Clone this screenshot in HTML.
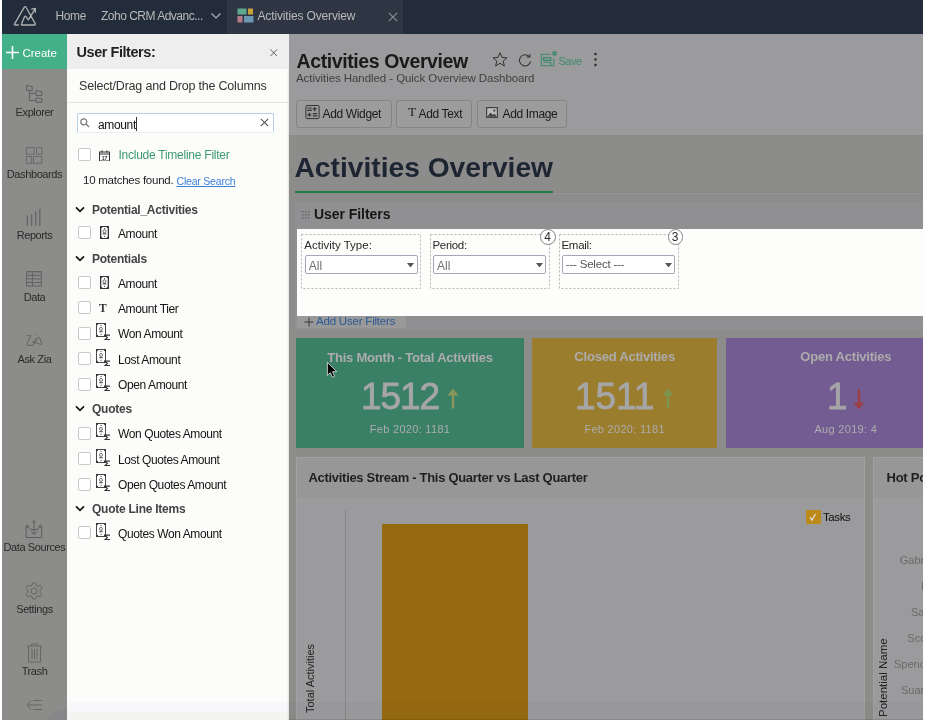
<!DOCTYPE html>
<html><head><meta charset="utf-8">
<style>
*{margin:0;padding:0;box-sizing:border-box}
html,body{-webkit-font-smoothing:antialiased;}
body{will-change:transform;width:925px;height:720px;overflow:hidden;background:#fff;font-family:"Liberation Sans",sans-serif}
.a{position:absolute;white-space:nowrap}
#top{position:absolute;left:2px;top:0;width:923px;height:34px;background:#222c3b}
#tab{position:absolute;left:227px;top:0;width:176px;height:34px;background:#2e3644}
#side{position:absolute;left:2px;top:34px;width:65px;height:686px;background:#8c8c8a}
#create{position:absolute;left:2px;top:34px;width:65px;height:35px;background:#44b089}
#panel{position:absolute;left:67px;top:34px;width:221.8px;height:686px;background:#fcfcfa}
#phead{position:absolute;left:67px;top:34px;width:221.8px;height:34.6px;background:#eeeeee}
#main{position:absolute;left:288.8px;top:34px;width:637px;height:686px;background:#8c8c8a}
#tb{position:absolute;left:288.8px;top:34px;width:637px;height:101.3px;background:#9b9b9d}
.sl{position:absolute;left:2px;width:65px;text-align:center;font-size:11px;color:#2a2a2a;white-space:nowrap;letter-spacing:-0.4px}
.cb{position:absolute;left:78px;width:13px;height:13px;border:1px solid #c9c9c9;border-radius:2px;background:#fff}
.it{position:absolute;left:118px;font-size:12px;color:#141414;white-space:nowrap;letter-spacing:-0.4px}
.grp{position:absolute;left:92px;font-size:12px;font-weight:bold;color:#444;white-space:nowrap;letter-spacing:-0.25px}
.chev{position:absolute;left:76px;width:9px;height:6px}

.btn{border:1px solid #858585;border-radius:3px;background:#9c9c9c}
.dash{border:1px dashed #b4b4b4}
.sel{border:1px solid #a2a8b8;border-radius:2px;background:#fff}
.badge{width:15.6px;height:15.6px;border:1px solid #858585;border-radius:50%;background:#fff;font-size:12px;line-height:14px;text-align:center;color:#2a2a2a;text-indent:-0.5px}
.card .ct{position:absolute;left:0;right:0;top:11.8px;text-align:center;font-size:13px;font-weight:bold;color:#acacac;letter-spacing:-0.22px;white-space:nowrap}
.card .cn{position:absolute;left:0;right:0;top:38px;text-align:center;font-size:37px;font-weight:normal;color:#a6a6a8;white-space:nowrap;letter-spacing:-1.1px;-webkit-text-stroke:0.8px #a6a6a8}
.card .cs{position:absolute;left:0;right:0;top:85px;text-align:center;font-size:11px;color:#acacac;white-space:nowrap;letter-spacing:0.3px}
.arw{margin-left:8px;vertical-align:0px}
.rot{transform:rotate(-90deg);transform-origin:0 0}
.nm{font-size:11px;color:#6a6a6a}
</style></head><body>
<svg width="0" height="0" style="position:absolute">
<defs>
<symbol id="num" viewBox="0 0 9 13"><rect x="0" y="0" width="9" height="13" fill="#333"/><path d="M1.3 2.3 Q2.3 2.1 2.4 1.1 H6.6 Q6.7 2.1 7.7 2.3 V10.7 Q6.7 10.9 6.6 11.9 H2.4 Q2.3 10.9 1.3 10.7 Z" fill="#fff"/><circle cx="4.5" cy="2.7" r="0.6" fill="#333"/><circle cx="4.5" cy="10.3" r="0.6" fill="#333"/><circle cx="4.5" cy="5.4" r="1.5" fill="none" stroke="#555" stroke-width="0.9"/><path d="M2.7 7.9 H6.3" stroke="#333" stroke-width="1"/></symbol>
<symbol id="agg" viewBox="0 0 14 17"><rect x="0.45" y="0.45" width="9.1" height="13.1" fill="#fff" stroke="#333" stroke-width="0.9"/><path d="M0.5 0.5 H2.4 Q2.2 2.2 0.5 2.4Z M9.5 0.5 H7.6 Q7.8 2.2 9.5 2.4Z M0.5 13.5 H2.4 Q2.2 11.8 0.5 11.6Z M9.5 13.5 H7.6 Q7.8 11.8 9.5 11.6Z" fill="#333"/><circle cx="5" cy="2.4" r="0.55" fill="#444"/><path d="M5 10.6 V12.2" stroke="#444" stroke-width="0.8"/><circle cx="5" cy="5.9" r="1.5" fill="none" stroke="#666" stroke-width="0.9"/><path d="M3.2 8.7 H6.8" stroke="#444" stroke-width="1"/><path d="M13.8 12.6 V12.1 H9 L11.4 14.4 L9 16.6 H13.8 V16" fill="none" stroke="#333" stroke-width="1.15"/></symbol>
<symbol id="chev" viewBox="0 0 10 7"><path d="M1 1.3 L5 5.3 L9 1.3" fill="none" stroke="#151515" stroke-width="1.7"/></symbol>
</defs></svg>

<div id="top"></div>
<div id="tab"></div>
<svg class="a" style="left:0;top:0" width="45" height="33" viewBox="0 0 45 33" fill="none" stroke="#b0b0b0" stroke-width="1.3" stroke-linejoin="round" stroke-linecap="round">
<path d="M18.4 25 L15.2 25 Q14 25 14.6 23.8 L24.3 7.2 Q25.2 5.9 26.1 7.2 L35.2 23.6 Q35.7 25 34.4 25 L22.3 25 Q20.9 25 21.6 23.8 L24.5 16.7 Q25.2 15.5 26 16.6 L28.3 19.9 L35.2 8.8"/>
<path d="M31.8 9.2 L35.4 8.5 L35.3 12.2"/>
</svg>
<div class="a m" style="left:55.5px;top:9px;font-size:12px;color:#b9b9b9;letter-spacing:-0.4px">Home</div>
<div class="a m" style="left:101px;top:9px;font-size:12px;color:#b9b9b9;letter-spacing:-0.5px">Zoho CRM Advanc...</div>
<svg class="a" style="left:210px;top:12px" width="12" height="8" viewBox="0 0 12 8" fill="none" stroke="#b0b0b0" stroke-width="1.2"><path d="M1.5 1.5 L6 6 L10.5 1.5"/></svg>
<svg class="a" style="left:237px;top:8px" width="17" height="15" viewBox="0 0 17 15">
<rect x="0.5" y="0.5" width="9" height="6" fill="#5ea88d"/><rect x="11" y="0.5" width="5" height="6" fill="#c8a23c"/>
<rect x="0.5" y="8" width="5" height="6.5" fill="#b77b89"/><rect x="7" y="8" width="9.5" height="6.5" fill="#6d97b3"/>
</svg>
<div class="a m" style="left:257.5px;top:9px;font-size:12px;color:#b9b9b9;letter-spacing:-0.15px">Activities Overview</div>
<svg class="a" style="left:388px;top:12px" width="10" height="10" viewBox="0 0 10 10" stroke="#8a8f97" stroke-width="1.1"><path d="M0.8 0.8 L9.2 9.2 M9.2 0.8 L0.8 9.2"/></svg>

<div id="side"></div>
<div id="create"></div>

<svg class="a" style="left:5px;top:46px" width="15" height="13" viewBox="0 0 15 13" stroke="#fff" stroke-width="1.6"><path d="M7.5 0 V13 M1 6.5 H14"/></svg>
<div class="a m" style="left:22.5px;top:46.5px;font-size:11.5px;color:#fff;letter-spacing:-0.02px">Create</div>
<svg class="a" style="left:20px;top:80px" width="30" height="25" viewBox="0 0 30 25" fill="none" stroke="#5e5e5e" stroke-width="1"><path d="M6.6 10.4 V5.7 H9 L9.6 6.4 H12.2 V10.4 Z M9.4 10.4 V20.5 H15.5 M9.4 13.4 H15.5"/><path d="M16 15.6 V10.7 H18.4 L19 11.4 H21.9 V15.6 Z M16 22.2 V17.9 H18.4 L19 18.6 H21.9 V22.2 Z"/></svg>
<div class="sl m" style="top:106px">Explorer</div>
<svg class="a" style="left:20px;top:142px" width="30" height="25" viewBox="0 0 30 25" fill="none" stroke="#6a6a6a" stroke-width="1"><rect x="6.4" y="5.6" width="7.6" height="6.6"/><rect x="16.5" y="5.6" width="5.3" height="6.6"/><rect x="6.4" y="14.5" width="5.3" height="6.8"/><rect x="13.5" y="14.5" width="8.3" height="6.8"/></svg>
<div class="sl m" style="top:168px">Dashboards</div>
<svg class="a" style="left:20px;top:205px" width="30" height="25" viewBox="0 0 30 25" fill="none" stroke="#666" stroke-width="1.4"><path d="M7.3 20.8 V10.6 M11.6 20.8 V9.2 M15.7 20.8 V6.2 M19.8 20.8 V3.7"/></svg>
<div class="sl m" style="top:229px">Reports</div>
<svg class="a" style="left:20px;top:265px" width="30" height="25" viewBox="0 0 30 25" fill="none" stroke="#626262" stroke-width="1"><rect x="6.6" y="6.6" width="14.7" height="14.4"/><path d="M6.6 10.4 H21.3 M6.6 13.9 H21.3 M6.6 17.5 H21.3 M12.4 6.6 V21"/><path d="M6.6 7.6 H21.3" stroke="#7a7a7a"/></svg>
<div class="sl m" style="top:291px">Data</div>
<svg class="a" style="left:20px;top:330px" width="30" height="20" viewBox="0 0 30 20" fill="none" stroke="#606060" stroke-width="0.9" stroke-linejoin="round" stroke-linecap="round"><path d="M6.6 5.7 H11 L6.4 14.6 Q6.5 15.3 7.5 15.3 H13.2 L15.8 8.5"/><path d="M12.4 11.7 Q16 12.6 21.2 14.6 Q21.6 14.2 21.4 13.5 L19.8 7.9 Q19 6.6 18 7.5 L14.4 13.6"/><circle cx="16.3" cy="5" r="0.55" fill="#606060" stroke="none"/></svg>
<div class="sl m" style="top:353px">Ask Zia</div>
<svg class="a" style="left:18px;top:515px" width="32" height="25" viewBox="0 0 32 25" fill="none" stroke="#5e5e5e" stroke-width="1"><path d="M8.1 11.5 V22.5 H23.7 V11.5"/><path d="M16 8 V19.4 M13.2 16.6 L16 19.4 L18.8 16.6 M9.6 11.6 L13 14.6 H16 M22.4 11.6 L19 14.6 H16"/><circle cx="16" cy="6.9" r="1.1"/><circle cx="9.3" cy="11.2" r="1.1"/><circle cx="22.6" cy="11.2" r="1.1"/></svg>
<div class="sl m" style="top:541px">Data Sources</div>
<svg class="a" style="left:25px;top:582px" width="18" height="18" viewBox="0 0 18 18" fill="none" stroke="#666" stroke-width="1"><path d="M7.5 1 H10.5 L11 3.3 L13 4.3 L15.2 3.2 L17 5.8 L15.2 7.5 V10.5 L17 12.2 L15.2 14.8 L13 13.7 L11 14.7 L10.5 17 H7.5 L7 14.7 L5 13.7 L2.8 14.8 L1 12.2 L2.8 10.5 V7.5 L1 5.8 L2.8 3.2 L5 4.3 L7 3.3 Z"/><circle cx="9" cy="9" r="3"/></svg>
<div class="sl m" style="top:603px">Settings</div>
<svg class="a" style="left:26px;top:643px" width="17" height="20" viewBox="0 0 17 20" fill="none" stroke="#666" stroke-width="1"><path d="M1 3 H16 M5.5 3 V1 H11.5 V3 M2.5 3 V19 H14.5 V3 M6 6 V16 M8.5 6 V16 M11 6 V16"/></svg>
<div class="sl m" style="top:665px">Trash</div>
<svg class="a" style="left:26px;top:699px" width="17" height="12" viewBox="0 0 17 12" fill="none" stroke="#666" stroke-width="1"><path d="M5 1.5 L1 6 L5 10.5 M1 6 H16 M7 1.5 H16 M7 10.5 H16"/></svg>
<div id="panel"></div>
<div id="phead"></div>

<div class="a m" style="left:76.5px;top:44px;font-size:14.5px;font-weight:bold;color:#222;letter-spacing:-0.45px">User Filters:</div>
<svg class="a" style="left:270px;top:48.8px" width="7.5" height="7.5" viewBox="0 0 7.5 7.5" stroke="#5a5a5a" stroke-width="0.95"><path d="M0.4 0.4 L7.1 7.1 M7.1 0.4 L0.4 7.1"/></svg>
<div class="a m" style="left:79px;top:79px;font-size:12.5px;color:#333;letter-spacing:-0.2px">Select/Drag and Drop the Columns</div>
<div class="a" style="left:67px;top:102px;width:221px;height:1px;background:#e4e4e4"></div>
<div class="a" style="left:77px;top:112.5px;width:197px;height:20px;border:1px solid #b7d0ea;border-bottom-color:#e9eff5;border-radius:2px;background:#fff"></div>
<svg class="a" style="left:80px;top:117.5px" width="10" height="10" viewBox="0 0 10 10" fill="none" stroke="#777" stroke-width="1.2"><circle cx="3.8" cy="3.8" r="3"/><path d="M6 6 L9 9"/></svg>
<div class="a m" style="left:98px;top:117.6px;font-size:12px;color:#111;letter-spacing:-0.35px">amount</div>
<div class="a" style="left:136px;top:117px;width:1px;height:14px;background:#333"></div>
<svg class="a" style="left:260px;top:118px" width="9" height="9" viewBox="0 0 9 9" stroke="#555" stroke-width="1.1"><path d="M0.8 0.8 L8.2 8.2 M8.2 0.8 L0.8 8.2"/></svg>
<div class="cb" style="top:148px"></div>
<svg class="a" style="left:99px;top:149.5px" width="11" height="11.5" viewBox="0 0 11 11.5" fill="none" stroke="#333" stroke-width="1"><rect x="0.5" y="2" width="10" height="9"/><path d="M0.5 4 H10.5 M3 0.3 V2.5 M8 0.3 V2.5"/><text x="5.5" y="9.8" font-size="5" font-family="Liberation Sans" font-weight="bold" text-anchor="middle" fill="#333" stroke="none">17</text></svg>
<div class="a m" style="left:118.5px;top:148px;font-size:12px;color:#3d9a78;letter-spacing:-0.25px">Include Timeline Filter</div>
<div class="a m" style="left:83px;top:174px;font-size:11.5px;color:#1e1e1e;letter-spacing:-0.25px">10 matches found.</div>
<div class="a m" style="left:176.5px;top:175px;font-size:10.5px;color:#3b7fd8;text-decoration:underline;letter-spacing:-0.2px">Clear Search</div>
<svg class="a" style="left:74.8px;top:205.5px" width="10" height="7"><use href="#chev"/></svg>
<div class="grp m" style="top:202.5px">Potential_Activities</div>
<div class="cb" style="top:226px"></div>
<svg class="a" style="left:100px;top:226px" width="9" height="13"><use href="#num"/></svg>
<div class="it m" style="top:226.5px">Amount</div>
<svg class="a" style="left:74.8px;top:254.5px" width="10" height="7"><use href="#chev"/></svg>
<div class="grp m" style="top:251.5px">Potentials</div>
<div class="cb" style="top:276px"></div>
<svg class="a" style="left:100px;top:276px" width="9" height="13"><use href="#num"/></svg>
<div class="it m" style="top:276.5px">Amount</div>
<div class="cb" style="top:301px"></div>
<div class="a" style="left:99px;top:301.5px;font-family:'Liberation Serif',serif;font-weight:bold;font-size:11.5px;color:#333">T</div>
<div class="it m" style="top:301.5px">Amount Tier</div>
<div class="cb" style="top:326.5px"></div>
<svg class="a" style="left:96px;top:323.0px" width="14" height="17"><use href="#agg"/></svg>
<div class="it m" style="top:327.0px">Won Amount</div>
<div class="cb" style="top:352px"></div>
<svg class="a" style="left:96px;top:348.5px" width="14" height="17"><use href="#agg"/></svg>
<div class="it m" style="top:352.5px">Lost Amount</div>
<div class="cb" style="top:377.7px"></div>
<svg class="a" style="left:96px;top:374.2px" width="14" height="17"><use href="#agg"/></svg>
<div class="it m" style="top:378.2px">Open Amount</div>
<svg class="a" style="left:74.8px;top:404.9px" width="10" height="7"><use href="#chev"/></svg>
<div class="grp m" style="top:401.9px">Quotes</div>
<div class="cb" style="top:426.5px"></div>
<svg class="a" style="left:96px;top:423.0px" width="14" height="17"><use href="#agg"/></svg>
<div class="it m" style="top:427.0px">Won Quotes Amount</div>
<div class="cb" style="top:452.2px"></div>
<svg class="a" style="left:96px;top:448.7px" width="14" height="17"><use href="#agg"/></svg>
<div class="it m" style="top:452.7px">Lost Quotes Amount</div>
<div class="cb" style="top:477.6px"></div>
<svg class="a" style="left:96px;top:474.1px" width="14" height="17"><use href="#agg"/></svg>
<div class="it m" style="top:478.1px">Open Quotes Amount</div>
<svg class="a" style="left:74.8px;top:504.70000000000005px" width="10" height="7"><use href="#chev"/></svg>
<div class="grp m" style="top:501.70000000000005px">Quote Line Items</div>
<div class="cb" style="top:526.4px"></div>
<svg class="a" style="left:96px;top:522.9px" width="14" height="17"><use href="#agg"/></svg>
<div class="it m" style="top:526.9px">Quotes Won Amount</div>
<div id="main"></div>
<div id="tb"></div>
<div id="mainc">
<div class="a m" style="left:296.5px;top:49.5px;font-size:19.5px;font-weight:bold;color:#1a1a1a;letter-spacing:-0.4px">Activities Overview</div>
<div class="a m" style="left:296px;top:72px;font-size:11.5px;color:#3f3f3f;letter-spacing:-0.07px">Activities Handled - Quick Overview Dashboard</div>
<svg class="a" style="left:492px;top:52px" width="16" height="15" viewBox="0 0 16 15" fill="none" stroke="#333" stroke-width="1"><path d="M8 0.8 L10 5.4 L15 5.8 L11.2 9 L12.4 14 L8 11.3 L3.6 14 L4.8 9 L1 5.8 L6 5.4 Z"/></svg>
<svg class="a" style="left:516px;top:53px" width="17" height="14" viewBox="0 0 17 14" fill="none" stroke="#333" stroke-width="1.05"><path d="M14.6 8.4 A5.6 5.6 0 1 1 13.2 3.6"/><path d="M10.6 3.9 H13.9 V0.9"/></svg>
<svg class="a" style="left:540px;top:50px" width="18" height="17" viewBox="0 0 18 17" fill="none" stroke="#3c8a6c" stroke-width="1.1"><path d="M10.5 4.3 H1.3 V15.8 H13.8 V8.5"/><path d="M3.5 7.6 H10.8 V10.4 H3.5 Z M3.5 12.3 H10.8 V15.8"/><path d="M14.6 0.8 V6.2 M12.3 2.1 L16.9 4.9 M16.9 2.1 L12.3 4.9" stroke-width="1.3"/></svg>
<div class="a m" style="left:558.5px;top:55px;font-size:11px;color:#3c8a6c;letter-spacing:-0.5px">Save</div>
<svg class="a" style="left:593px;top:52px" width="5" height="15" viewBox="0 0 5 15" fill="#333"><circle cx="2.5" cy="2" r="1.3"/><circle cx="2.5" cy="7.5" r="1.3"/><circle cx="2.5" cy="13" r="1.3"/></svg>
<div class="a btn" style="left:296px;top:100px;width:96px;height:27.5px"></div>
<svg class="a" style="left:302px;top:102px" width="20" height="20" viewBox="0 0 20 20" fill="none" stroke="#333" stroke-width="1"><rect x="3.9" y="3.5" width="13.2" height="13.1" rx="1"/><path d="M5.3 6 H9.8 M5.3 8.4 H9.8 M10.8 11.6 H15.2 M10.8 13.9 H15.2" stroke-width="1.2"/><path d="M10.6 6.9 H14.6 M12.6 4.9 V9.3 M5.4 12.8 H9.4 M7.4 10.8 V14.8" stroke-width="1.3"/></svg>
<div class="a m" style="left:322.5px;top:106.5px;font-size:12px;color:#1a1a1a;letter-spacing:-0.35px">Add Widget</div>
<div class="a btn" style="left:396px;top:100px;width:76px;height:27.5px"></div>
<div class="a" style="left:408px;top:104px;font-size:13.5px;color:#222;font-family:'Liberation Serif',serif">T</div>
<div class="a m" style="left:418.5px;top:106.5px;font-size:12px;color:#1a1a1a;letter-spacing:-0.35px">Add Text</div>
<div class="a btn" style="left:476.5px;top:100px;width:90px;height:27.5px"></div>
<svg class="a" style="left:486px;top:107px" width="12" height="11" viewBox="0 0 12 11"><rect x="0" y="0" width="12" height="11" fill="#444"/><rect x="1.2" y="1.2" width="9.6" height="8.6" fill="#bbb"/><path d="M1.2 9.8 L4.5 5.5 L7 8 L8.5 6.5 L10.8 9.8 Z" fill="#444"/><circle cx="8.3" cy="3.6" r="1.1" fill="#444"/></svg>
<div class="a m" style="left:502.5px;top:106.5px;font-size:12px;color:#1a1a1a;letter-spacing:-0.35px">Add Image</div>

<div class="a m" style="left:294.5px;top:151.4px;font-size:28.2px;font-weight:bold;color:#1e2532;letter-spacing:0px">Activities Overview</div>
<div class="a" style="left:295px;top:191px;width:257.5px;height:2.2px;background:#1f7a47"></div>
<div class="a" style="left:552.5px;top:192.3px;width:370.5px;height:1px;background:#868686"></div><div class="a" style="left:552.5px;top:193.3px;width:370.5px;height:1px;background:#979799"></div>

<div class="a" style="left:295px;top:202px;width:628px;height:128px;background:#909092"></div>
<svg class="a" style="left:301.5px;top:211px" width="8" height="8" viewBox="0 0 8 8" fill="#666"><rect x="0" y="0" width="1.5" height="1.5"/><rect x="3" y="0" width="1.5" height="1.5"/><rect x="6" y="0" width="1.5" height="1.5"/><rect x="0" y="3" width="1.5" height="1.5"/><rect x="3" y="3" width="1.5" height="1.5"/><rect x="6" y="3" width="1.5" height="1.5"/><rect x="0" y="6" width="1.5" height="1.5"/><rect x="3" y="6" width="1.5" height="1.5"/><rect x="6" y="6" width="1.5" height="1.5"/></svg>
<div class="a m" style="left:314px;top:206px;font-size:14px;font-weight:bold;color:#161616;letter-spacing:-0.05px">User Filters</div>
<div class="a" style="left:297px;top:229px;width:626px;height:87.3px;background:#fdfdfb"></div>
<div class="a" style="left:297px;top:316.3px;width:110px;height:11.5px;background:#999;border-right:1px solid #8c8c8c"></div>
<svg class="a" style="left:304px;top:317px" width="10" height="10" viewBox="0 0 10 10" stroke="#3a3a3a" stroke-width="1"><path d="M5 0.5 V9.5 M0.5 5 H9.5"/></svg>
<div class="a m" style="left:316px;top:315px;font-size:11.5px;color:#2d5a98;letter-spacing:-0.2px">Add User Filters</div>
<svg class="a" style="left:301.3px;top:234px" width="121" height="56" viewBox="0 0 121 56"><rect x="0.5" y="0.5" width="119" height="54" fill="none" stroke="#b9b9b9" stroke-width="1" stroke-dasharray="2.2 1.8"/></svg>
<div class="a m" style="left:304.3px;top:238.5px;font-size:11.5px;color:#2a2a2a;letter-spacing:0px">Activity Type:</div>
<div class="a sel" style="left:304.6px;top:255.2px;width:113px;height:19.3px"></div>
<div class="a m" style="left:308.8px;top:258.5px;font-size:12px;color:#707070">All</div>
<svg class="a" style="left:407.3px;top:262.8px" width="7" height="4.5" viewBox="0 0 7 4.5"><path d="M0 0 H7 L3.5 4.5Z" fill="#555"/></svg>
<svg class="a" style="left:429.5px;top:234px" width="121" height="56" viewBox="0 0 121 56"><rect x="0.5" y="0.5" width="119" height="54" fill="none" stroke="#b9b9b9" stroke-width="1" stroke-dasharray="2.2 1.8"/></svg>
<div class="a m" style="left:432.5px;top:238.5px;font-size:11.5px;color:#2a2a2a;letter-spacing:-0.3px">Period:</div>
<div class="a sel" style="left:432.8px;top:255.2px;width:113px;height:19.3px"></div>
<div class="a m" style="left:437.0px;top:258.5px;font-size:12px;color:#707070">All</div>
<svg class="a" style="left:535.5px;top:262.8px" width="7" height="4.5" viewBox="0 0 7 4.5"><path d="M0 0 H7 L3.5 4.5Z" fill="#555"/></svg>
<div class="a badge" style="left:540px;top:229.2px">4</div>
<svg class="a" style="left:558.5px;top:234px" width="121" height="56" viewBox="0 0 121 56"><rect x="0.5" y="0.5" width="119" height="54" fill="none" stroke="#b9b9b9" stroke-width="1" stroke-dasharray="2.2 1.8"/></svg>
<div class="a m" style="left:561.5px;top:238.5px;font-size:11.5px;color:#2a2a2a;letter-spacing:-0.3px">Email:</div>
<div class="a sel" style="left:561.8px;top:255.2px;width:113px;height:19.3px"></div>
<div class="a m" style="left:565.8px;top:258px;font-size:11.5px;color:#555;letter-spacing:-0.2px">--- Select ---</div>
<svg class="a" style="left:664.5px;top:262.8px" width="7" height="4.5" viewBox="0 0 7 4.5"><path d="M0 0 H7 L3.5 4.5Z" fill="#555"/></svg>
<div class="a badge" style="left:667.5px;top:229.2px">3</div>

<div class="a card" style="left:296px;top:338px;width:228px;height:110.4px;background:#3a8066">
 <div class="ct"><span class="m">This Month - Total Activities</span></div>
 <div class="cn"><span class="m">1512</span><svg class="arw" width="12" height="21" viewBox="0 0 12 21"><path d="M6 20.5 V6" stroke="#8a9559" stroke-width="2.4"/><path d="M0.5 7.5 L6 0.5 L11.5 7.5 Z" fill="#8a9559"/></svg></div>
 <div class="cs"><span class="m">Feb 2020: 1181</span></div>
</div>
<div class="a card" style="left:532.3px;top:337.6px;width:184.7px;height:110px;background:#9b7d2e">
 <div class="ct"><span class="m">Closed Activities</span></div>
 <div class="cn"><span class="m" style="letter-spacing:-0.1px">1511</span><svg class="arw" width="12" height="21" viewBox="0 0 12 21"><path d="M6 20.5 V6" stroke="#7d9550" stroke-width="2.4"/><path d="M0.5 7.5 L6 0.5 L11.5 7.5 Z" fill="#7d9550"/></svg></div>
 <div class="cs"><span class="m">Feb 2020: 1181</span></div>
</div>
<div class="a card" style="left:725.8px;top:337.6px;width:240px;height:110px;background:#735c91">
 <div class="ct"><span class="m">Open Activities</span></div>
 <div class="cn"><span class="m">1</span><svg class="arw" style="margin-left:6px;vertical-align:-1.5px" width="12" height="21" viewBox="0 0 12 21"><path d="M6 0.5 V15" stroke="#9c4046" stroke-width="2.4"/><path d="M0.5 13.5 L6 20.5 L11.5 13.5 Z" fill="#9c4046"/></svg></div>
 <div class="cs"><span class="m">Aug 2019: 4</span></div>
</div>

<svg class="a" style="left:320px;top:355px" width="24" height="26" viewBox="320 355 24 26"><path d="M327.4 362.3 L327.4 375.3 L330.3 372.6 L332.4 377.2 L334.6 376.2 L332.5 371.7 L336.8 371.7 Z" fill="#000" stroke="#e8e8e8" stroke-width="0.8" stroke-linejoin="round"/></svg>
<div class="a" style="left:296px;top:456.7px;width:568.5px;height:264px;background:#9b9b9d;border:1px solid #a2a2a2"></div>
<div class="a" style="left:297px;top:457.7px;width:566.5px;height:40.5px;background:#979797"></div>
<div class="a m" style="left:308.5px;top:470px;font-size:13px;font-weight:bold;color:#1f1f1f;letter-spacing:-0.3px">Activities Stream - This Quarter vs Last Quarter</div>
<div class="a" style="left:345px;top:510px;width:1px;height:210px;background:#868686"></div>
<div class="a" style="left:382px;top:524.2px;width:146px;height:196px;background:#966a0e"></div>
<div class="a" style="left:806px;top:510px;width:14.5px;height:14px;background:#bb8a18;border-radius:1px"></div>
<svg class="a" style="left:806px;top:510px" width="14" height="14" viewBox="0 0 14 14" fill="none" stroke="#ddd" stroke-width="1.4"><path d="M4 7.5 L6 10 L9.5 4"/></svg>
<div class="a m" style="left:823px;top:510.5px;font-size:11.5px;color:#111;letter-spacing:-0.4px">Tasks</div>
<div class="a rot m" style="left:304.2px;top:713.3px;font-size:11px;color:#222">Total Activities</div>

<div class="a" style="left:873px;top:456.7px;width:60px;height:264px;background:#9b9b9d;border:1px solid #a2a2a2"></div>
<div class="a" style="left:874px;top:457.7px;width:60px;height:40.5px;background:#979797"></div>
<div class="a m" style="left:886.5px;top:470px;font-size:13px;font-weight:bold;color:#1f1f1f;letter-spacing:-0.25px">Hot Po</div>
<div class="a rot m" style="left:876.5px;top:716.8px;font-size:11.5px;color:#222">Potential Name</div>
<div class="a m nm" style="left:899.8px;top:553.5px">Gabr</div>
<div class="a m nm" style="left:921.3px;top:579.5px">l</div>
<div class="a m nm" style="left:911px;top:605.5px">Sa</div>
<div class="a m nm" style="left:907.3px;top:631.5px">Sco</div>
<div class="a m nm" style="left:894px;top:657.5px">Spenc</div>
<div class="a m nm" style="left:901px;top:684.0px">Suar</div>
</div>

<div class="a" style="left:47.5px;top:708.5px;width:19.5px;height:11.5px;background:#878789;clip-path:polygon(14.5px 0,19.5px 0,19.5px 11.5px,0 11.5px,0 8px,1.5px 7px,6px 5.5px,7.5px 3.5px,10.5px 2px)"></div>
<div class="a" style="left:67px;top:702px;width:221.8px;height:10px;background:#f8f8fa"></div>
<div class="a" style="left:67px;top:712px;width:221.8px;height:8px;background:#f4f4f3"></div><div class="a" style="left:286.8px;top:68.6px;width:2px;height:652px;background:linear-gradient(to right,rgba(0,0,0,0),rgba(0,0,0,0.1))"></div>
<div class="a" style="left:288.8px;top:701.7px;width:634.2px;height:17px;background:rgba(60,60,90,0.03)"></div>
<div class="a" style="left:288.8px;top:718.6px;width:634.2px;height:1.4px;background:rgba(0,0,0,0.12)"></div>
<div class="a" style="left:923px;top:0;width:2px;height:720px;background:#fdfdfd"></div>

</body></html>
